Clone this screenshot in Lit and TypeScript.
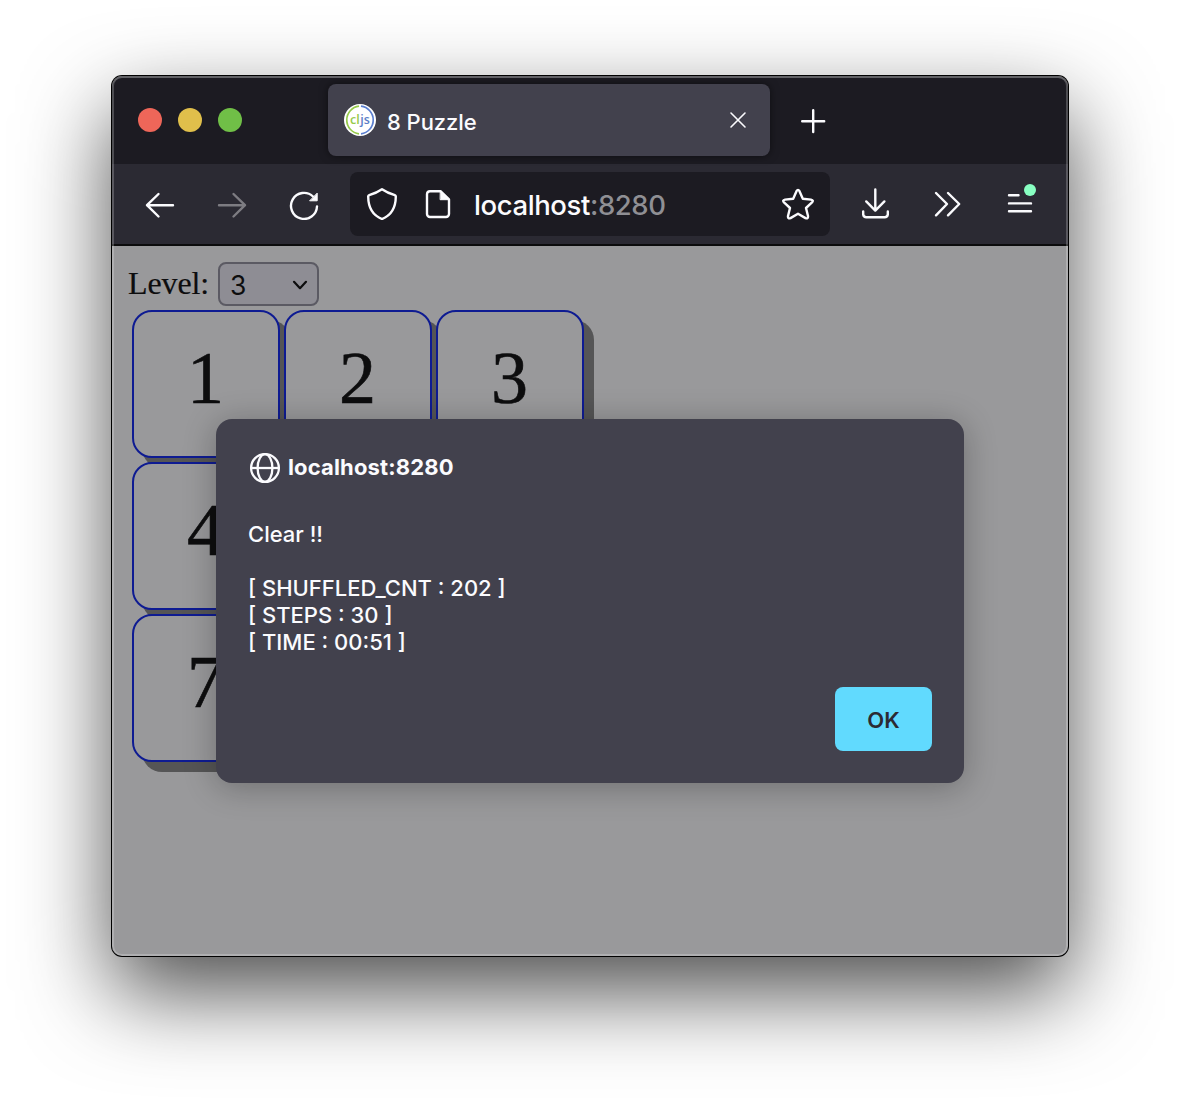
import { LitElement, html, css } from "lit";
import { customElement, property } from "lit/decorators.js";

@customElement("title-bar")
class TitleBar extends LitElement {
  static styles = css`
    :host {
      display: flex;
      align-items: flex-start;
      height: 88px;
      box-sizing: border-box;
      padding: 8px 0 0 26px;
      background: #1c1b22;
      color: #fbfbfe;
      font-family: Inter, "Liberation Sans", sans-serif;
    }
    .lights {
      display: flex;
      gap: 16px;
      margin-top: 24px;
      width: 190px;
    }
    .light {
      width: 24px;
      height: 24px;
      border-radius: 50%;
    }
    .red { background: #ee6659; }
    .yellow { background: #e0bf4b; }
    .green { background: #70bf47; }
    .tab {
      display: flex;
      align-items: center;
      width: 442px;
      height: 72px;
      box-sizing: border-box;
      padding: 0 22px 0 16px;
      border-radius: 8px;
      background: #42414d;
      box-shadow: 0 0 8px rgba(0, 0, 0, 0.5);
    }
    .favicon { flex: none; }
    .glyphs {
      font: 600 12.5px "Open Sans", sans-serif;
    }
    .title {
      flex: 1;
      margin-left: 11px;
      padding-top: 4px;
      font-size: 22px;
      font-weight: 500;
      line-height: 28px;
      letter-spacing: -0.05px;
    }
    .plus { margin: 24px 0 0 30px; }
  `;

  render() {
    return html`
      <div class="lights">
        <div class="light red"></div>
        <div class="light yellow"></div>
        <div class="light green"></div>
      </div>
      <div class="tab">
        <svg class="favicon" width="32" height="32" viewBox="0 0 32 32">
          <circle cx="16" cy="16" r="16" fill="#fff" />
          <path d="M15 2.2A13.9 13.9 0 0 0 15 29.8" fill="none" stroke="#96ca4b" stroke-width="1.7" />
          <path d="M17 2.2A13.9 13.9 0 0 1 17 29.8" fill="none" stroke="#5b7fd0" stroke-width="1.7" />
          <text class="glyphs" x="5.9" y="20" textLength="9.8" lengthAdjust="spacingAndGlyphs" fill="#96ca4b">cl</text>
          <text class="glyphs" x="16.2" y="20" textLength="9.6" lengthAdjust="spacingAndGlyphs" fill="#5b7fc8">js</text>
        </svg>
        <span class="title">8 Puzzle</span>
        <svg width="20" height="20" viewBox="0 0 20 20" fill="none" stroke="#fbfbfe" stroke-width="1.6" stroke-linecap="round">
          <path d="M3 3L17 17M17 3L3 17" />
        </svg>
      </div>
      <svg class="plus" width="26" height="26" viewBox="0 0 26 26" fill="none" stroke="#fbfbfe" stroke-width="2.4" stroke-linecap="round">
        <path d="M13.2 2.2V24M2.2 13.2H24.2" />
      </svg>
    `;
  }
}

@customElement("nav-bar")
class NavBar extends LitElement {
  static styles = css`
    :host {
      display: flex;
      align-items: flex-start;
      height: 82px;
      box-sizing: border-box;
      padding: 8px 0 0 32px;
      border-bottom: 2px solid #0c0c0d;
      background: #2b2a33;
      font-family: Inter, "Liberation Sans", sans-serif;
    }
    svg {
      flex: none;
      fill: none;
      stroke: #fbfbfe;
      stroke-width: 2.4;
      stroke-linecap: round;
      stroke-linejoin: round;
    }
    .buttons {
      display: flex;
      gap: 40px;
      padding-top: 16px;
      width: 206px;
    }
    .disabled { stroke: #7d7c82; }
    .solid { fill: #fbfbfe; }
    .address {
      display: flex;
      align-items: center;
      width: 480px;
      height: 64px;
      box-sizing: border-box;
      padding: 0 16px;
      border-radius: 8px;
      background: #1c1b22;
    }
    .page { margin-left: 24px; }
    .url {
      flex: 1;
      margin-left: 20px;
      padding-top: 2px;
      color: #fbfbfe;
      font-size: 27.5px;
      font-weight: 500;
      line-height: 34px;
      letter-spacing: -0.4px;
    }
    .port { color: #8f8f94; }
    .tools {
      display: flex;
      gap: 40px;
      padding: 16px 0 0 29px;
    }
    .dot { fill: #88ffc2; stroke: none; }
    .menu { overflow: visible; }
  `;

  render() {
    return html`
      <div class="buttons">
        <svg width="32" height="32" viewBox="0 0 32 32"><path d="M29 17.2H3M14.5 6L3 17.2L14.5 28.5" /></svg>
        <svg class="disabled" width="32" height="32" viewBox="0 0 32 32"><path d="M3 17.2H29M17.5 6L29 17.2L17.5 28.5" /></svg>
        <svg width="32" height="32" viewBox="0 0 32 32">
          <path d="M29 18.5A13 13 0 1 1 25 8.5" />
          <path class="solid" stroke-width="1" d="M29.2 5.5V12.8H22Z" />
        </svg>
      </div>
      <div class="address">
        <svg width="32" height="32" viewBox="0 0 32 32">
          <path d="M16 1.3C12.8 3.5 7.5 5.9 3.2 7.2Q2.1 7.6 2.2 8.8C2.3 18.5 5.8 27 16 31C26.2 27 29.7 18.5 29.8 8.8Q29.9 7.6 28.8 7.2C24.5 5.9 19.2 3.5 16 1.3Z" />
        </svg>
        <svg class="page" width="32" height="32" viewBox="0 0 32 32">
          <path d="M8 3.2H18.5L27 11.4V26A3 3 0 0 1 24 29H8A3 3 0 0 1 5 26V6A3 3 0 0 1 8 3.2Z" />
          <path class="solid" stroke-width="1" d="M18.5 3.2L27 11.7H18.5Z" />
        </svg>
        <span class="url">localhost<span class="port">:8280</span></span>
        <svg width="32" height="32" viewBox="0 0 32 32">
          <path d="M14.5 3.2Q16 .6 17.5 3.2L20.8 10.8L29 11.6Q32 12.2 30 14.4L24 20L26 28Q26.3 31 23.5 30.1L16 25.8L8.5 30.1Q5.7 31 6 28L8 20L2 14.4Q0 12.2 3 11.6L11.2 10.8Z" />
        </svg>
      </div>
      <div class="tools">
        <svg width="32" height="32" viewBox="0 0 32 32">
          <path d="M16.3 1.4V22.4M7.2 13.4L16.3 22.6L25.4 13.4M4.2 23.5V26.5A3.2 3.2 0 0 0 7.4 29.2H25.6A3.2 3.2 0 0 0 28.8 26.5V23.5" />
        </svg>
        <svg width="32" height="32" viewBox="0 0 32 32"><path d="M5 5L16 16L5 27.3M17 5L28.2 16L17 27.3" /></svg>
        <svg class="menu" width="32" height="32" viewBox="0 0 32 32">
          <path d="M6 7.3H15.5M6 15.4H28M6 23.3H28" />
          <circle class="dot" cx="27" cy="2" r="6" />
        </svg>
      </div>
    `;
  }
}

@customElement("puzzle-board")
class PuzzleBoard extends LitElement {
  @property({ type: Array }) tiles: string[] = ["1", "2", "3", "4", "", "", "7", ""];

  static styles = css`
    :host {
      display: block;
      padding: 16px;
      color: #0d0d0e;
      font-family: "Liberation Serif", serif;
    }
    .level {
      display: flex;
      align-items: center;
      height: 44px;
      font-size: 32px;
      line-height: 44px;
    }
    .label {
      width: 82px;
      padding-bottom: 2px;
      letter-spacing: -0.1px;
      -webkit-text-stroke: 0.2px #0d0d0e;
    }
    .select {
      display: flex;
      align-items: center;
      justify-content: space-between;
      width: 101px;
      height: 44px;
      box-sizing: border-box;
      margin-left: 8px;
      padding: 1px 9px 0 10px;
      border: 2px solid #5b5a63;
      border-radius: 8px;
      background: #8e8d94;
      font: 26.5px/40px Inter, sans-serif;
    }
    .board {
      display: grid;
      grid-template-columns: repeat(3, 148px);
      gap: 4px;
      padding: 4px;
    }
    .tile {
      height: 148px;
      box-sizing: border-box;
      padding: 0 1px 12px 0;
      display: flex;
      align-items: center;
      justify-content: center;
      border: 2px solid #0e1b92;
      border-radius: 20px;
      background: #99999b;
      box-shadow: 10px 10px 0 #555556;
      font-size: 74px;
      line-height: 1;
      -webkit-text-stroke: 0.6px #0d0d0e;
    }
  `;

  render() {
    return html`
      <div class="level">
        <span class="label">Level:</span>
        <div class="select">
          <span>3</span>
          <svg width="16" height="12" viewBox="0 0 16 12" fill="none" stroke="#0d0d0e" stroke-width="2.2" stroke-linecap="round" stroke-linejoin="round">
            <path d="M2 2.8L8 9.2L14 2.8" />
          </svg>
        </div>
      </div>
      <div class="board">${this.tiles.map((n) => html`<div class="tile">${n}</div>`)}</div>
    `;
  }
}

@customElement("alert-dialog")
class AlertDialog extends LitElement {
  static styles = css`
    :host {
      display: flex;
      flex-direction: column;
      box-sizing: border-box;
      padding: 32px;
      border-radius: 16px;
      background: #42414d;
      color: #fbfbfe;
      box-shadow: 0 4px 32px rgba(12, 12, 13, 0.3);
      font: 500 22px/27px Inter, "Liberation Sans", sans-serif;
    }
    .origin {
      display: flex;
      align-items: center;
      gap: 7px;
      height: 34px;
      font-weight: 700;
      letter-spacing: 0.15px;
    }
    .globe { margin-left: 1px; }
    .message {
      flex: 1;
      margin-top: 36px;
      white-space: pre-line;
    }
    .host { margin-top: -1px; }
    .ok {
      align-self: flex-end;
      width: 97px;
      height: 64px;
      padding: 2px 0 0;
      border: 0;
      border-radius: 8px;
      background: #61dafe;
      color: #2b2a33;
      font: 600 22px/27px Inter, sans-serif;
    }
  `;

  render() {
    const message = "Clear !!\n\n[ SHUFFLED_CNT : 202 ]\n[ STEPS : 30 ]\n[ TIME : 00:51 ]";
    return html`
      <div class="origin">
        <svg class="globe" width="32" height="32" viewBox="0 0 32 32" fill="none" stroke="#fbfbfe" stroke-width="2.3">
          <circle cx="16" cy="16" r="13.9" />
          <ellipse cx="16" cy="16" rx="7.4" ry="13.9" />
          <path d="M2 16H30" />
        </svg>
        <span class="host">localhost:8280</span>
      </div>
      <div class="message">${message}</div>
      <button class="ok">OK</button>
    `;
  }
}

@customElement("app-root")
class AppRoot extends LitElement {
  static styles = css`
    :host {
      display: block;
      width: 1180px;
      height: 1104px;
      box-sizing: border-box;
      padding: 76px 112px 0;
      background: #fff;
      overflow: hidden;
    }
    .window {
      position: relative;
      display: flex;
      flex-direction: column;
      height: 880px;
      border-radius: 10px;
      background: #99999b;
      box-shadow: 0 0 0 1px #000, 0 36px 88px rgba(0, 0, 0, 0.7);
    }
    .clip {
      height: 880px;
      border-radius: 10px;
      overflow: hidden;
    }
    .dialog {
      position: absolute;
      left: 104px;
      top: 343px;
      width: 748px;
      height: 364px;
    }
    .rim {
      position: absolute;
      inset: 0;
      border-radius: 10px;
      box-shadow: inset 0 0 0 2px rgba(255, 255, 255, 0.22), inset 0 2px 0 rgba(255, 255, 255, 0.12);
      pointer-events: none;
    }
  `;

  render() {
    return html`
      <div class="window">
        <div class="clip">
          <title-bar></title-bar>
          <nav-bar></nav-bar>
          <puzzle-board></puzzle-board>
        </div>
        <alert-dialog class="dialog"></alert-dialog>
        <div class="rim"></div>
      </div>
    `;
  }
}
